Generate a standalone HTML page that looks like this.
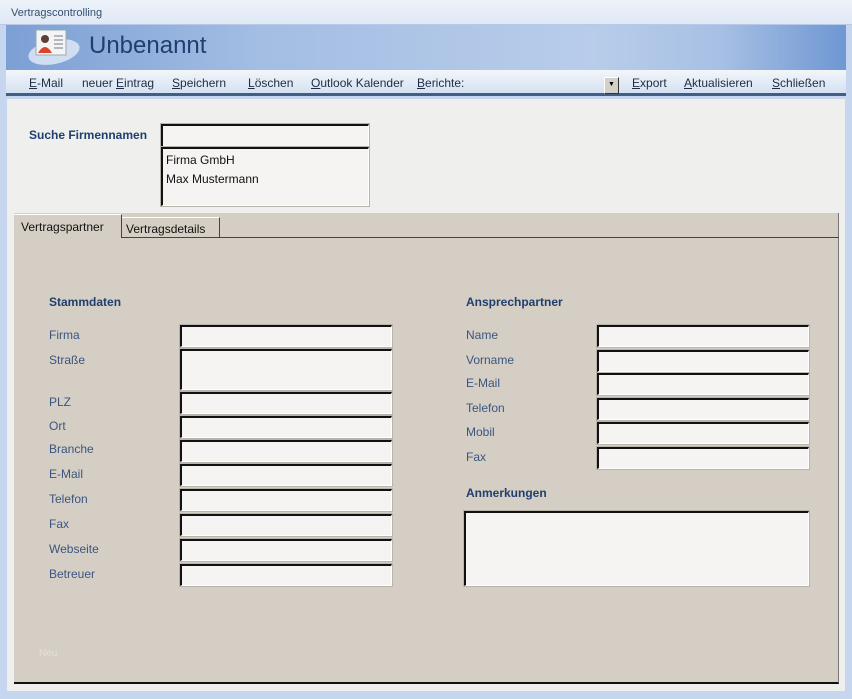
<!DOCTYPE html>
<html><head><meta charset="utf-8"><style>
*{margin:0;padding:0;box-sizing:border-box}
body{width:852px;height:699px;overflow:hidden;background:#c5d6ee;font-family:"Liberation Sans",sans-serif;font-size:12px;position:relative}
.a{position:absolute}
.title{left:0;top:0;width:852px;height:25px;background:linear-gradient(#eef3fa,#dfe8f5);border-bottom:1px solid #b7c9e4}
.hdr{left:6px;top:25px;width:840px;height:45px;background:linear-gradient(90deg,#7c9fd5 0%,#a3bde3 30%,#b8cdea 70%,#a7c0e4 85%,#6f97d3 100%)}
.tb{left:6px;top:70px;width:840px;height:26px;background:linear-gradient(#f3f6fb,#d5e1f1);border-bottom:3px solid #3f5f86}
.tb span{position:absolute;top:6px;color:#1e2c44;font-size:12px}
.body{left:7px;top:99px;width:838px;height:592px;background:#efefed}
.lbl{color:#3a5680;font-size:12px}
.h{color:#1f3f6e;font-weight:bold;font-size:12px}
.in{background:#f5f4f2;border-top:2px solid #111;border-left:2px solid #111;border-right:1px solid #fff;border-bottom:1px solid #fff;outline:1px solid #b8b3ab}
.panel{left:14px;top:213px;width:825px;height:471px;background:#d5cec4;border-bottom:2px solid #111;border-right:1px solid #777}
</style></head><body>
<div class="a title"><span class="a" style="left:11px;top:7px;font-size:11px;color:#34506f">Vertragscontrolling</span></div>
<div class="a hdr">
 <svg class="a" style="left:18px;top:2px" width="60" height="42"><ellipse cx="30" cy="25" rx="26" ry="12" fill="#e4ecf7" opacity=".8" transform="rotate(-12 30 25)"/><rect x="12" y="3" width="30" height="25" fill="#f4f4f4" stroke="#9aa" /><circle cx="21" cy="12" r="4" fill="#5a4035"/><path d="M14 26 q7-12 14 0z" fill="#d8442e"/><path d="M30 9h9M30 13h9M30 17h9M30 21h9" stroke="#778" stroke-width="1"/></svg>
 <span class="a" style="left:83px;top:7px;font-size:24px;color:#1f3f6e">Unbenannt</span>
</div>
<div class="a tb">
 <span style="left:23px"><u>E</u>-Mail</span>
 <span style="left:76px">neuer <u>E</u>intrag</span>
 <span style="left:166px"><u>S</u>peichern</span>
 <span style="left:242px"><u>L</u>öschen</span>
 <span style="left:305px"><u>O</u>utlook Kalender</span>
 <span style="left:411px"><u>B</u>erichte:</span>
 <div class="a" style="left:598px;top:7px;width:15px;height:17px;background:#d4d0c8;border:1px solid #fff;border-right-color:#333;border-bottom-color:#333;font-size:7px;text-align:center;line-height:14px">▼</div>
 <span style="left:626px"><u>E</u>xport</span>
 <span style="left:678px"><u>A</u>ktualisieren</span>
 <span style="left:766px"><u>S</u>chließen</span>
</div>
<div class="a body"></div>
<span class="a h" style="left:29px;top:128px">Suche Firmennamen</span>
<div class="a in" style="left:161px;top:124px;width:208px;height:23px"></div>
<div class="a in" style="left:161px;top:147px;width:208px;height:59px;padding:2px 3px;font-size:12px;color:#111;line-height:19px">Firma GmbH<br>Max Mustermann</div>
<div class="a panel"></div>
<div class="a" style="left:121px;top:237px;width:718px;height:1px;background:#444"></div>
<div class="a" style="left:14px;top:214px;width:108px;height:24px;background:#d5cec4;border-right:1px solid #444;border-top:1px solid #fff"><span class="a" style="left:7px;top:5px;color:#111">Vertragspartner</span></div>
<div class="a" style="left:122px;top:217px;width:98px;height:21px;background:#d5cec4;border-right:1px solid #444;border-top:1px solid #fff;border-bottom:1px solid #444"><span class="a" style="left:4px;top:4px;color:#111">Vertragsdetails</span></div>
<span class="a h" style="left:49px;top:295px">Stammdaten</span>
<span class="a h" style="left:466px;top:295px">Ansprechpartner</span>
<span class="a h" style="left:466px;top:486px">Anmerkungen</span>
<!-- left fields -->
<span class="a lbl" style="left:49px;top:328px">Firma</span><div class="a in" style="left:180px;top:325px;width:212px;height:22px"></div>
<span class="a lbl" style="left:49px;top:353px">Straße</span><div class="a in" style="left:180px;top:349px;width:212px;height:41px"></div>
<span class="a lbl" style="left:49px;top:395px">PLZ</span><div class="a in" style="left:180px;top:392px;width:212px;height:22px"></div>
<span class="a lbl" style="left:49px;top:419px">Ort</span><div class="a in" style="left:180px;top:416px;width:212px;height:22px"></div>
<span class="a lbl" style="left:49px;top:442px">Branche</span><div class="a in" style="left:180px;top:440px;width:212px;height:22px"></div>
<span class="a lbl" style="left:49px;top:467px">E-Mail</span><div class="a in" style="left:180px;top:464px;width:212px;height:22px"></div>
<span class="a lbl" style="left:49px;top:492px">Telefon</span><div class="a in" style="left:180px;top:489px;width:212px;height:22px"></div>
<span class="a lbl" style="left:49px;top:517px">Fax</span><div class="a in" style="left:180px;top:514px;width:212px;height:22px"></div>
<span class="a lbl" style="left:49px;top:542px">Webseite</span><div class="a in" style="left:180px;top:539px;width:212px;height:22px"></div>
<span class="a lbl" style="left:49px;top:567px">Betreuer</span><div class="a in" style="left:180px;top:564px;width:212px;height:22px"></div>
<!-- right fields -->
<span class="a lbl" style="left:466px;top:328px">Name</span><div class="a in" style="left:597px;top:325px;width:212px;height:22px"></div>
<span class="a lbl" style="left:466px;top:353px">Vorname</span><div class="a in" style="left:597px;top:350px;width:212px;height:22px"></div>
<span class="a lbl" style="left:466px;top:376px">E-Mail</span><div class="a in" style="left:597px;top:373px;width:212px;height:22px"></div>
<span class="a lbl" style="left:466px;top:401px">Telefon</span><div class="a in" style="left:597px;top:398px;width:212px;height:22px"></div>
<span class="a lbl" style="left:466px;top:425px">Mobil</span><div class="a in" style="left:597px;top:422px;width:212px;height:22px"></div>
<span class="a lbl" style="left:466px;top:450px">Fax</span><div class="a in" style="left:597px;top:447px;width:212px;height:22px"></div>
<div class="a in" style="left:464px;top:511px;width:345px;height:75px"></div>
<span class="a" style="left:39px;top:648px;font-size:10px;color:#e4e0d8">Neu</span>
</body></html>
